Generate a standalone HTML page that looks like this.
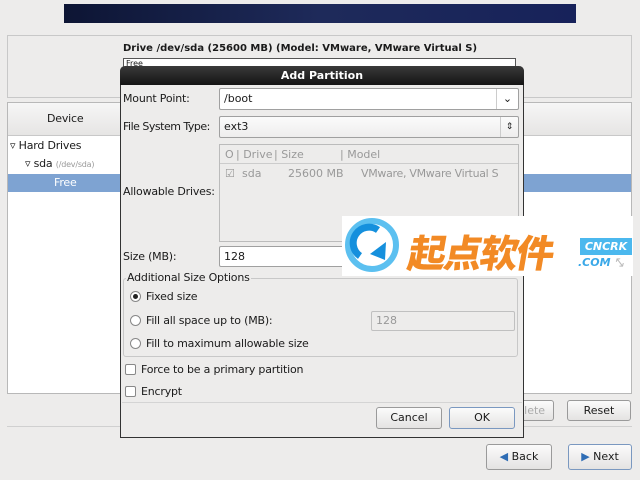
<!DOCTYPE html>
<html><head><meta charset="utf-8"><style>
*{box-sizing:border-box;margin:0;padding:0}
body{width:640px;height:480px;background:#edeceb;font-family:"DejaVu Sans","Liberation Sans",sans-serif;font-size:11px;color:#1a1a1a;position:relative;overflow:hidden}
.a{position:absolute}
.t{font-size:11px;letter-spacing:-0.2px}
.btn{position:absolute;border:1px solid #9a9a9a;border-radius:3px;background:linear-gradient(#fbfbfb,#e4e3e2);text-align:center;line-height:20px;font-size:11px}
.in{position:absolute;background:#fff;border:1px solid #a0a0a0;border-radius:2px;padding-left:4px;line-height:20px;font-size:11px}
.rb{position:absolute;width:11px;height:11px;border:1px solid #888;border-radius:50%;background:#fff}
.cb{position:absolute;width:11px;height:11px;border:1px solid #888;border-radius:2px;background:#fff}
</style></head><body>
<div class="a" style="left:64px;top:4px;width:512px;height:19px;background:linear-gradient(90deg,#0d1534,#1e2a5a 50%,#17225a)"></div>
<div class="a" style="left:7px;top:35px;width:625px;height:63px;border:1px solid #c8c8c8;background:#edeceb"></div>
<div class="a" style="left:123px;top:43px;font-weight:bold;font-size:10px">Drive /dev/sda (25600 MB) (Model: VMware, VMware Virtual S)</div>
<div class="a" style="left:123px;top:58px;width:393px;height:12px;border:1px solid #555;background:#fff;font-size:8px;padding-left:2px">Free</div>
<div class="a" style="left:7px;top:102px;width:625px;height:292px;border:1px solid #b8b8b8;background:#fff"></div>
<div class="a" style="left:8px;top:103px;width:623px;height:33px;background:linear-gradient(#f6f6f6,#e6e5e4);border-bottom:1px solid #c8c8c8"></div>
<div class="a t" style="left:47px;top:112px">Device</div>
<div class="a t" style="left:10px;top:139px">▿ Hard Drives</div>
<div class="a t" style="left:25px;top:157px">▿ sda <span style="font-size:8px;color:#999">(/dev/sda)</span></div>
<div class="a t" style="left:8px;top:174px;width:623px;height:18px;background:#7ea3d2;color:#fff;padding-left:46px;line-height:18px">Free</div>
<div class="btn" style="left:500px;top:400px;width:54px;height:21px;color:#aaa">Delete</div>
<div class="btn" style="left:567px;top:400px;width:64px;height:21px">Reset</div>
<div class="a" style="left:7px;top:426px;width:625px;height:1px;background:#d0d0d0"></div>
<div class="btn" style="left:486px;top:444px;width:66px;height:26px;line-height:24px"><span style="color:#2f6db5">◀</span> Back</div>
<div class="btn" style="left:568px;top:444px;width:64px;height:26px;line-height:24px;border-color:#7a98c0"><span style="color:#2f6db5">▶</span> Next</div>

<div class="a" style="left:120px;top:66px;width:404px;height:372px;background:#edeceb;border:1px solid #333;border-top:none;border-radius:5px 5px 0 0"></div>
<div class="a" style="left:120px;top:66px;width:404px;height:19px;background:linear-gradient(#3a3a3a,#141414);border-radius:5px 5px 0 0;color:#fff;font-weight:bold;text-align:center;line-height:19px;font-size:11px">Add Partition</div>
<div class="a t" style="left:123px;top:92px">Mount Point:</div>
<div class="in" style="left:219px;top:88px;width:300px;height:22px">/boot<span style="position:absolute;right:0;top:0;width:22px;height:20px;border-left:1px solid #ccc;text-align:center">⌄</span></div>
<div class="a t" style="left:123px;top:120px;letter-spacing:-0.5px">File System Type:</div>
<div class="in" style="left:219px;top:116px;width:300px;height:22px;background:linear-gradient(#fbfbfb,#eeeded)">ext3<span style="position:absolute;right:0;top:0;width:18px;height:20px;border-left:1px solid #ccc;text-align:center;font-size:9px">⇕</span></div>
<div class="a" style="left:219px;top:144px;width:300px;height:98px;border:1px solid #bbb;background:#edeceb"></div>
<div class="a" style="left:220px;top:145px;width:298px;height:19px;border-bottom:1px solid #ccc;color:#999;line-height:19px;font-size:11px"><span class="a" style="left:5px">O</span><span class="a" style="left:16px">| Drive</span><span class="a" style="left:54px">| Size</span><span class="a" style="left:120px">| Model</span></div>
<div class="a" style="left:220px;top:166px;width:298px;height:16px;color:#999;font-size:11px;line-height:16px"><span class="a" style="left:5px">☑</span><span class="a" style="left:22px">sda</span><span class="a" style="left:68px">25600 MB</span><span class="a" style="left:141px;letter-spacing:-0.3px">VMware, VMware Virtual S</span></div>
<div class="a t" style="left:123px;top:185px">Allowable Drives:</div>
<div class="a t" style="left:123px;top:250px">Size (MB):</div>
<div class="in" style="left:219px;top:246px;width:300px;height:21px">128</div>
<div class="a" style="left:123px;top:278px;width:395px;height:79px;border:1px solid #c8c8c8;border-radius:3px"></div>
<div class="a t" style="left:126px;top:271px;background:#edeceb;padding:0 1px">Additional Size Options</div>
<div class="rb" style="left:130px;top:291px"><div style="width:5px;height:5px;background:#222;border-radius:50%;margin:2px"></div></div>
<div class="a t" style="left:146px;top:290px">Fixed size</div>
<div class="rb" style="left:130px;top:315px"></div>
<div class="a t" style="left:146px;top:314px">Fill all space up to (MB):</div>
<div class="in" style="left:371px;top:311px;width:144px;height:20px;background:#edeceb;color:#999;border-color:#c0c0c0;line-height:18px">128</div>
<div class="rb" style="left:130px;top:338px"></div>
<div class="a t" style="left:146px;top:337px">Fill to maximum allowable size</div>
<div class="cb" style="left:125px;top:364px"></div>
<div class="a t" style="left:141px;top:363px">Force to be a primary partition</div>
<div class="cb" style="left:125px;top:386px"></div>
<div class="a t" style="left:141px;top:385px">Encrypt</div>
<div class="a" style="left:122px;top:402px;width:400px;height:1px;background:#d4d4d4"></div>
<div class="btn" style="left:376px;top:407px;width:66px;height:22px">Cancel</div>
<div class="btn" style="left:449px;top:407px;width:66px;height:22px;border-color:#7a98c0">OK</div>

<div class="a" style="left:342px;top:216px;width:291px;height:60px;background:#fff"></div>
<svg class="a" style="left:342px;top:216px" width="60" height="60"><circle cx="30" cy="29" r="24" fill="none" stroke="#5cc0f0" stroke-width="6"/><path d="M18 40 A15 15 0 1 1 36 14" fill="none" stroke="#1590dd" stroke-width="7"/><path d="M28 38 L44 26 L43 44 Z" fill="#1590dd"/></svg>
<div class="a" style="left:409px;top:229px;font-family:'Noto Sans CJK SC',sans-serif;font-weight:900;font-size:38px;line-height:44px;color:#f28a25;letter-spacing:-2px;transform:skewX(-10deg)">起点软件</div>
<div class="a" style="left:580px;top:238px;width:52px;height:17px;background:#4bb8ee;color:#fff;font-weight:bold;font-size:11px;line-height:17px;text-align:center;font-style:italic">CNCRK</div>
<div class="a" style="left:578px;top:256px;color:#3aa8e8;font-weight:bold;font-size:11px;font-style:italic">.COM <span style="color:#bbb">⤡</span></div>
</body></html>
